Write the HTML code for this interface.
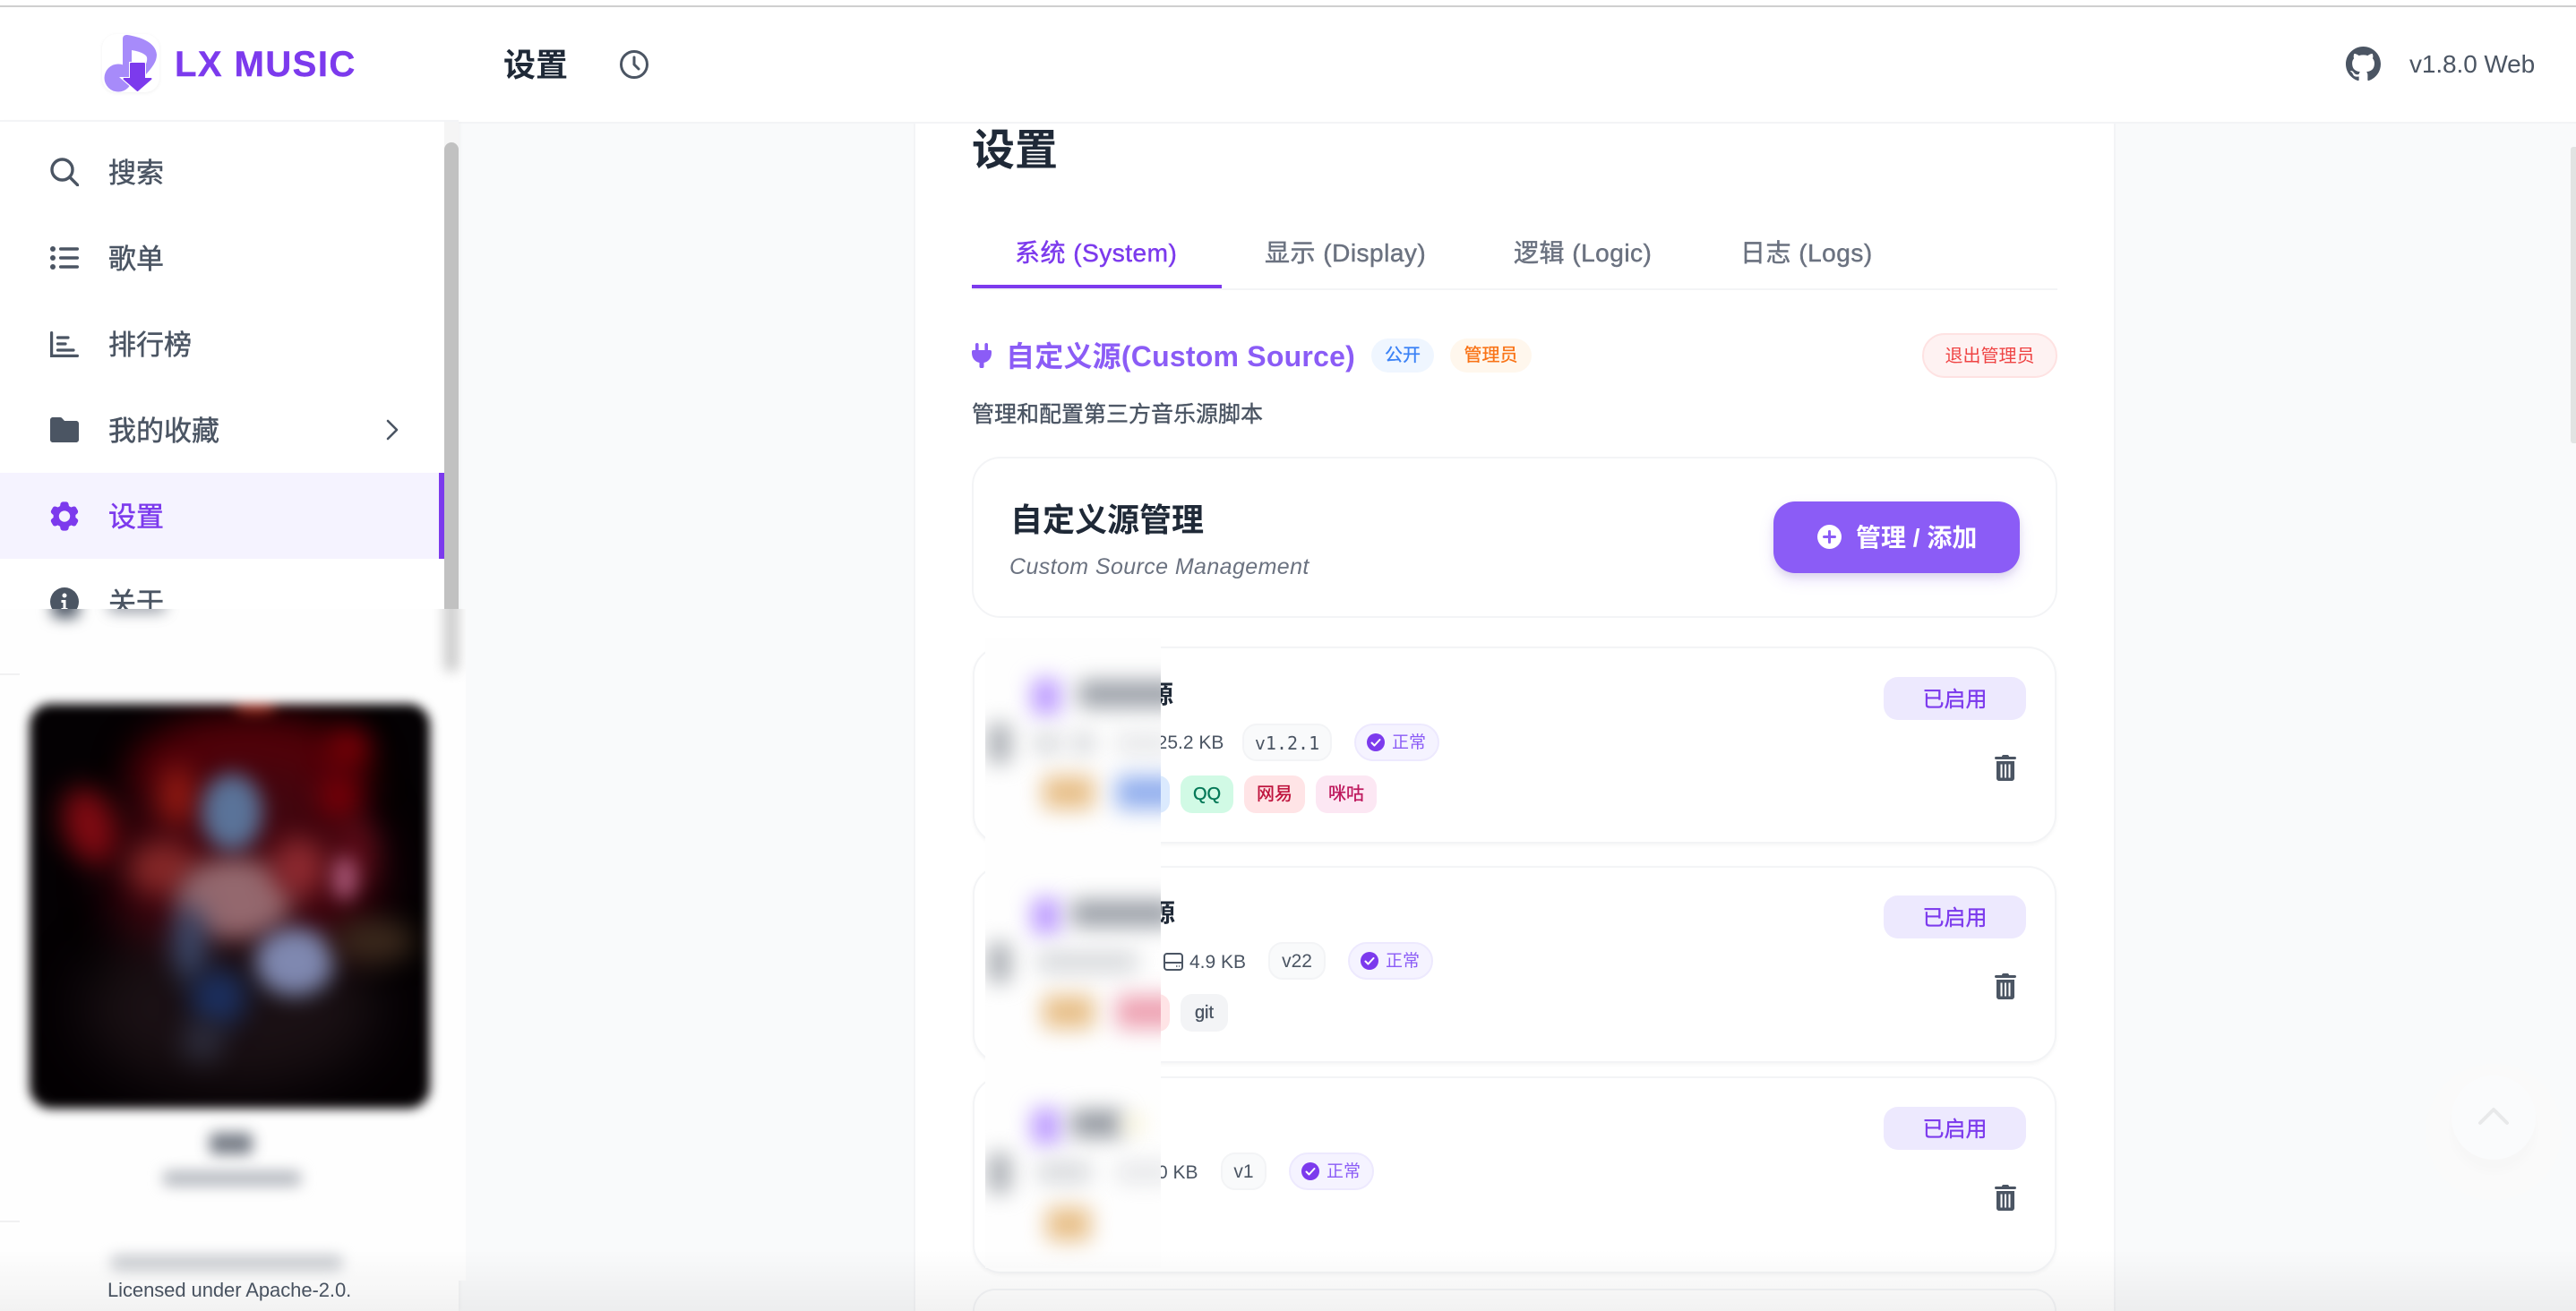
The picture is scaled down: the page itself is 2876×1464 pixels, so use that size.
<!DOCTYPE html>
<html lang="zh">
<head>
<meta charset="utf-8">
<title>LX Music 设置</title>
<style>
*{box-sizing:border-box;margin:0;padding:0}
html,body{width:2876px;height:1464px;overflow:hidden;background:#f9fafb}
body{position:relative;font-family:"Liberation Sans","Noto Sans CJK SC",sans-serif;color:#4b5563}
.a{position:absolute}
.t{position:absolute;white-space:nowrap;line-height:1}
.nav{font-size:31px;font-weight:400;-webkit-text-stroke:.5px currentColor;color:#4b5563;left:121px}
.tab{font-size:28px;font-weight:400;-webkit-text-stroke:.45px currentColor;color:#6b7280;top:269px;letter-spacing:.5px}
.card{position:absolute;left:1086px;width:1210px;height:220px;background:#fff;border:2px solid #f3f4f6;border-radius:32px;box-shadow:0 2px 4px rgba(0,0,0,.04)}
.en{position:absolute;left:2103px;width:159px;height:48px;background:#ede9fe;border-radius:16px;color:#7c3aed;font-size:24px;-webkit-text-stroke:.35px currentColor;text-align:center;line-height:51px}
.ver{position:absolute;height:42px;background:#f9fafb;border:2px solid #f3f4f6;border-radius:16px;color:#4b5563;font-size:21px;line-height:40px;text-align:center}
.st{position:absolute;height:42px;width:95px;background:#f5f3ff;border:2px solid #ede9fe;border-radius:21px;color:#8b5cf6;font-size:19px;line-height:40px;padding-left:40px}
.st svg{position:absolute;left:12px;top:9px}
.tag{position:absolute;height:42px;border-radius:13px;font-size:20px;-webkit-text-stroke:.35px currentColor;text-align:center;line-height:42px}
.size{position:absolute;font-size:21px;line-height:1;color:#4b5563;white-space:nowrap}
.blob{position:absolute;filter:blur(12px);border-radius:6px}
.c{position:absolute;border-radius:50%;filter:blur(14px)}
</style>
</head>
<body>
<div class="a" style="left:0;top:0;width:2876px;height:136px;background:#fff"></div>
<div class="a" style="left:0;top:6px;width:2876px;height:2px;background:#cfcfcf"></div>

<div class="a" style="left:1020px;top:136px;width:1342px;height:1328px;background:#fff;border-left:2px solid #f3f4f6;border-right:2px solid #f3f4f6"></div>
<div class="a" style="left:2870px;top:164px;width:6px;height:331px;background:#e2e4e3;border-radius:3px 0 0 3px"></div>
<div class="a" style="left:512px;top:136px;width:2364px;height:2px;background:#f3f4f6"></div>

<!-- sidebar -->
<div class="a" style="left:0;top:136px;width:512px;height:1328px;background:#fff;box-shadow:2px 0 4px rgba(0,0,0,.03)"></div>
<div class="a" style="left:0;top:134px;width:512px;height:2px;background:#f3f4f6"></div>
<div class="a" style="left:496px;top:136px;width:16px;height:600px;background:#f5f5f5"></div>
<div class="a" style="left:496px;top:159px;width:16px;height:590px;background:#c1c1c1;border-radius:8px"></div>

<!-- logo -->
<div class="a" style="left:114px;top:38px;width:64px;height:65px;background:#fff;border-radius:16px;box-shadow:0 1px 4px rgba(0,0,0,.06)"></div>
<svg class="a" style="left:114px;top:36px" width="66" height="68" viewBox="0 0 66 68">
<circle cx="18" cy="51" r="15.5" fill="#a78bfa"/>
<path d="M23 8C23 4 25 3 28 3C42 5 60 11 61 25C61 33 56 39 49 47L44 44C48 38 51 33 50 28C49 24 40 21 33 20L33 54L23 54Z" fill="#a78bfa"/>
<path d="M30 33H49V50H59L39.500 68L19 50H30Z" fill="#fff"/>
<path d="M32 35H47V52H54.500L39.500 65L24.500 52H32Z" fill="#7c3aed" stroke="#7c3aed" stroke-width="2" stroke-linejoin="round"/>
</svg>
<div class="t" style="left:195px;top:52px;font-size:40px;font-weight:700;color:#7c3aed;letter-spacing:1.45px;-webkit-text-stroke:.4px #7c3aed">LX MUSIC</div>

<!-- header main -->
<div class="t" style="left:562px;top:55px;font-size:36px;font-weight:700;color:#1f2937">设置</div>
<svg class="a" style="left:692px;top:56px" width="32" height="32" viewBox="0 0 32 32" fill="none" stroke="#4b5563" stroke-width="3" stroke-linecap="round" stroke-linejoin="round"><circle cx="16" cy="16" r="14.500"/><path d="M16 8v8l5 5"/></svg>
<svg class="a" style="left:2619px;top:52px" width="39" height="39" viewBox="0 0 16 16" fill="#4b5563"><path d="M8 0C3.58 0 0 3.58 0 8c0 3.54 2.29 6.53 5.47 7.59.4.07.55-.17.55-.38 0-.19-.01-.82-.01-1.49-2.01.37-2.53-.49-2.69-.94-.09-.23-.48-.94-.82-1.13-.28-.15-.68-.52-.01-.53.63-.01 1.08.58 1.23.82.72 1.21 1.87.87 2.33.66.07-.52.28-.87.51-1.07-1.78-.2-3.64-.89-3.64-3.95 0-.87.31-1.59.82-2.15-.08-.2-.36-1.02.08-2.12 0 0 .67-.21 2.2.82.64-.18 1.32-.27 2-.27.68 0 1.36.09 2 .27 1.53-1.04 2.2-.82 2.2-.82.44 1.1.16 1.92.08 2.12.51.56.82 1.27.82 2.15 0 3.07-1.87 3.75-3.65 3.95.29.25.54.73.54 1.48 0 1.07-.01 1.93-.01 2.2 0 .21.15.46.55.38A8.013 8.013 0 0016 8c0-4.42-3.58-8-8-8z"/></svg>
<div class="t" style="left:2690px;top:58px;font-size:28px;color:#4b5563;letter-spacing:-.1px">v1.8.0 Web</div>

<!-- nav -->
<svg class="a" style="left:56px;top:176px" width="32" height="32" viewBox="0 0 32 32" fill="none" stroke="#4b5563" stroke-width="3.400" stroke-linecap="round"><circle cx="13.500" cy="13.500" r="11.500"/><path d="M22 22l9 9"/></svg>
<div class="t nav" style="top:178px">搜索</div>
<svg class="a" style="left:56px;top:274px" width="32" height="28" viewBox="0 0 32 28" fill="#4b5563"><circle cx="3" cy="4" r="3"/><circle cx="3" cy="14" r="3"/><circle cx="3" cy="24" r="3"/><rect x="10" y="2.300" width="22" height="3.400" rx="1.700"/><rect x="10" y="12.300" width="22" height="3.400" rx="1.700"/><rect x="10" y="22.300" width="22" height="3.400" rx="1.700"/></svg>
<div class="t nav" style="top:274px">歌单</div>
<svg class="a" style="left:56px;top:370px" width="32" height="29" viewBox="0 0 32 29" fill="none" stroke="#4b5563" stroke-width="3.200" stroke-linecap="round"><path d="M1.600 1.600V27.400H30.400"/><path d="M8.500 7H20M8.500 14H17M8.500 21H26"/></svg>
<div class="t nav" style="top:370px">排行榜</div>
<svg class="a" style="left:56px;top:466px" width="32" height="28" viewBox="0 0 32 28" fill="#4b5563"><path d="M3 0h8c1 0 1.800.4 2.400 1.100L16 4h13c1.700 0 3 1.300 3 3v18c0 1.700-1.300 3-3 3H3c-1.700 0-3-1.300-3-3V3C0 1.300 1.300 0 3 0z"/></svg>
<div class="t nav" style="top:466px">我的收藏</div>
<svg class="a" style="left:431px;top:468px" width="14" height="24" viewBox="0 0 14 24" fill="none" stroke="#4b5563" stroke-width="2.600" stroke-linecap="round" stroke-linejoin="round"><path d="M2 2l10 10L2 22"/></svg>
<div class="a" style="left:0;top:528px;width:496px;height:96px;background:#f5f3ff"></div>
<div class="a" style="left:490px;top:528px;width:6px;height:96px;background:#7c3aed"></div>
<svg class="a" style="left:56px;top:560px" width="32" height="33" viewBox="2.600 2 18.800 20" fill="#7c3aed"><path fill-rule="evenodd" d="M11.078 2.250c-.917 0-1.699.663-1.850 1.567L9.050 4.889c-.02.12-.115.26-.297.348a7.493 7.493 0 0 0-.986.57c-.166.115-.334.126-.45.083L6.300 5.508a1.875 1.875 0 0 0-2.282.819l-.922 1.597a1.875 1.875 0 0 0 .432 2.385l.84.692c.095.078.17.229.154.43a7.598 7.598 0 0 0 0 1.139c.015.2-.059.352-.153.43l-.841.692a1.875 1.875 0 0 0-.432 2.385l.922 1.597a1.875 1.875 0 0 0 2.282.818l1.019-.382c.115-.043.283-.031.45.082.312.214.641.405.985.57.182.088.277.228.297.35l.178 1.071c.151.904.933 1.567 1.850 1.567h1.844c.916 0 1.699-.663 1.850-1.567l.178-1.072c.02-.12.114-.26.297-.349.344-.165.673-.356.985-.57.167-.114.335-.125.45-.082l1.020.382a1.875 1.875 0 0 0 2.280-.819l.923-1.597a1.875 1.875 0 0 0-.432-2.385l-.84-.692c-.095-.078-.17-.229-.154-.43a7.614 7.614 0 0 0 0-1.139c-.016-.2.059-.352.153-.43l.84-.692c.708-.582.891-1.590.433-2.385l-.922-1.597a1.875 1.875 0 0 0-2.282-.818l-1.020.382c-.114.043-.282.031-.449-.083a7.490 7.490 0 0 0-.985-.57c-.183-.087-.277-.227-.297-.348l-.179-1.072a1.875 1.875 0 0 0-1.850-1.567h-1.843ZM12 15.750a3.750 3.750 0 1 0 0-7.500 3.750 3.750 0 0 0 0 7.500Z"/></svg>
<div class="t nav" style="top:562px;color:#7c3aed">设置</div>
<svg class="a" style="left:56px;top:656px" width="32" height="32" viewBox="0 0 32 32"><circle cx="16" cy="16" r="16" fill="#4b5563"/><circle cx="16" cy="9" r="2.500" fill="#fff"/><path d="M12.500 14h5v9h2v3h-7v-3h2v-6h-2z" fill="#fff"/></svg>
<div class="t nav" style="top:658px">关于</div>

<!-- sidebar blur overlay -->
<div class="a" style="left:0;top:680px;width:520px;height:750px;background:#fefefe;overflow:hidden">
  <div class="blob" style="left:58px;top:-14px;width:30px;height:24px;background:#4b5563;filter:blur(8px)"></div>
  <div class="blob" style="left:121px;top:-12px;width:64px;height:16px;background:#6b7280;filter:blur(8px);opacity:.7"></div>
  <div class="blob" style="left:496px;top:-20px;width:16px;height:90px;background:#c1c1c1;opacity:.85;filter:blur(7px)"></div>
  <!-- cover -->
  <div class="a" style="left:33px;top:106px;width:447px;height:452px;filter:blur(6px)">
    <div class="a" style="inset:0;border-radius:24px;background:#040103;overflow:hidden">
      <div class="c" style="left:112px;top:12px;width:268px;height:130px;background:#560008;filter:blur(20px)"></div>
      <div class="c" style="left:90px;top:60px;width:300px;height:260px;background:#42060f;filter:blur(26px)"></div>
      <div class="c" style="left:341px;top:125px;width:45px;height:80px;background:#5a0c18"></div>
      <div class="c" style="left:60px;top:250px;width:330px;height:180px;background:#1a1014;filter:blur(30px)"></div>
      <div class="c" style="left:38px;top:92px;width:58px;height:88px;background:#800a12;transform:rotate(-18deg)"></div>
      <div class="c" style="left:146px;top:70px;width:38px;height:65px;background:#961a12"></div>
      <div class="c" style="left:112px;top:155px;width:76px;height:58px;background:#862828"></div>
      <div class="c" style="left:335px;top:28px;width:44px;height:40px;background:#820008"></div>
      <div class="c" style="left:325px;top:82px;width:42px;height:44px;background:#7e0008"></div>
      <div class="c" style="left:165px;top:172px;width:128px;height:90px;background:#94686e;filter:blur(12px)"></div>
      <div class="c" style="left:270px;top:150px;width:60px;height:66px;background:#8e2a30"></div>
      <div class="c" style="left:338px;top:170px;width:28px;height:50px;background:#a85676;filter:blur(9px)"></div>
      <div class="c" style="left:192px;top:78px;width:68px;height:86px;background:#5a7399;filter:blur(10px)"></div>
      <div class="c" style="left:252px;top:250px;width:88px;height:76px;background:#7f88b0;filter:blur(11px)"></div>
      <div class="c" style="left:160px;top:222px;width:38px;height:88px;background:#3c4a6c"></div>
      <div class="c" style="left:180px;top:296px;width:62px;height:64px;background:#1c3060"></div>
      <div class="c" style="left:170px;top:355px;width:46px;height:44px;background:#2e2e3e"></div>
      <div class="c" style="left:340px;top:240px;width:90px;height:50px;background:#3a281c"></div>
      <div class="c" style="left:228px;top:-4px;width:48px;height:14px;background:#b03828;filter:blur(5px)"></div>
    </div>
  </div>
  <div class="blob" style="left:234px;top:585px;width:48px;height:24px;background:#5f6672;opacity:.85;filter:blur(8px)"></div>
  <div class="blob" style="left:182px;top:628px;width:154px;height:16px;background:#b0b4bb;filter:blur(8px)"></div>
  <div class="blob" style="left:124px;top:722px;width:258px;height:16px;background:#c4c7cc;filter:blur(8px)"></div>
</div>
<div class="a" style="left:0;top:752px;width:22px;height:2px;background:#f1f1f2"></div>
<div class="a" style="left:0;top:1363px;width:22px;height:2px;background:#f1f1f2"></div>
<div class="t" style="left:120px;top:1430px;font-size:22px;color:#4b5563;letter-spacing:-.07px">Licensed under Apache-2.0.</div>

<!-- content -->
<div class="t" style="left:1085px;top:145px;font-size:48px;font-weight:700;color:#1f2937">设置</div>
<div class="a" style="left:1085px;top:322px;width:1212px;height:2px;background:#f3f4f6"></div>
<div class="a" style="left:1085px;top:318px;width:279px;height:4px;background:#7c3aed"></div>
<div class="t tab" style="left:1133px;color:#7c3aed">系统 (System)</div>
<div class="t tab" style="left:1412px">显示 (Display)</div>
<div class="t tab" style="left:1690px">逻辑 (Logic)</div>
<div class="t tab" style="left:1943px">日志 (Logs)</div>

<svg class="a" style="left:1085px;top:383px" width="22" height="28" viewBox="0 0 22 28" fill="#8b5cf6"><rect x="4" y="0" width="3.600" height="9" rx="1.800"/><rect x="14.400" y="0" width="3.600" height="9" rx="1.800"/><path d="M1.500 8h19c.8 0 1.500.7 1.500 1.500V11c0 6-3.500 10-8.500 11v4.500c0 .8-.7 1.500-1.500 1.500h-2c-.8 0-1.500-.7-1.500-1.500V22C3.500 21 0 17 0 11V9.500C0 8.700.7 8 1.500 8z"/></svg>
<div class="t" style="left:1123px;top:382px;font-size:32px;font-weight:700;color:#8b5cf6;letter-spacing:.22px">自定义源(Custom Source)</div>
<div class="t" style="left:1531px;top:378px;width:70px;height:38px;background:#eff6ff;border-radius:19px;color:#3b82f6;font-size:20px;-webkit-text-stroke:.3px #3b82f6;line-height:39px;text-align:center">公开</div>
<div class="t" style="left:1619px;top:378px;width:91px;height:38px;background:#fff7ed;border-radius:19px;color:#f97316;font-size:20px;-webkit-text-stroke:.3px #f97316;line-height:39px;text-align:center">管理员</div>
<div class="t" style="left:2146px;top:372px;width:151px;height:50px;background:#fef2f2;border:2px solid #fee2e2;border-radius:25px;color:#ef4444;font-size:20px;line-height:48px;text-align:center">退出管理员</div>
<div class="t" style="left:1085px;top:451px;font-size:25px;-webkit-text-stroke:.4px #4b5563;color:#4b5563">管理和配置第三方音乐源脚本</div>

<!-- manage card -->
<div class="a" style="left:1085px;top:510px;width:1212px;height:180px;background:#fff;border:2px solid #f3f4f6;border-radius:32px"></div>
<div class="t" style="left:1128px;top:563px;font-size:36px;font-weight:700;color:#1f2937">自定义源管理</div>
<div class="t" style="left:1127px;top:621px;font-size:25px;font-style:italic;color:#6b7280;letter-spacing:.4px">Custom Source Management</div>
<div class="a" style="left:1980px;top:560px;width:275px;height:80px;background:#8b5cf6;border-radius:24px;box-shadow:0 8px 16px rgba(139,92,246,.18),0 4px 8px rgba(0,0,0,.08)"></div>
<svg class="a" style="left:2029px;top:586px" width="27" height="27" viewBox="0 0 27 27"><circle cx="13.500" cy="13.500" r="13.500" fill="#fff"/><path d="M13.500 7.500v12M7.500 13.500h12" stroke="#8b5cf6" stroke-width="3" stroke-linecap="round"/></svg>
<div class="t" style="left:2072px;top:587px;font-size:28px;font-weight:700;color:#fff">管理 / 添加</div>

<!-- source cards -->
<div class="card" style="top:722px"></div>
<div class="card" style="top:967px"></div>
<div class="card" style="top:1202px"></div>
<div class="card" style="top:1439px;height:25px;border-bottom:0;border-radius:32px 32px 0 0;box-shadow:none"></div>

<!-- card 1 -->
<div class="t" style="left:1282px;top:762px;font-size:28px;font-weight:700;color:#1f2937">源</div>
<div class="size" style="left:1280px;top:819px">225.2 KB</div>
<div class="ver" style="left:1387px;top:808px;width:100px;font-family:'DejaVu Sans Mono','Liberation Mono',monospace;font-size:20px">v1.2.1</div>
<div class="st" style="left:1512px;top:808px"><svg width="20" height="20" viewBox="0 0 20 20"><circle cx="10" cy="10" r="10" fill="#7c3aed"/><path d="M5.500 10.500l3 3 6-6.500" fill="none" stroke="#fff" stroke-width="2" stroke-linecap="round" stroke-linejoin="round"/></svg>正常</div>
<div class="tag" style="left:1240px;top:866px;width:66px;background:#dbeafe"></div>
<div class="tag" style="left:1318px;top:866px;width:59px;background:#d1fae5;color:#047857">QQ</div>
<div class="tag" style="left:1389px;top:866px;width:68px;background:#ffe4e6;color:#be123c">网易</div>
<div class="tag" style="left:1469px;top:866px;width:68px;background:#fce7f3;color:#be185d">咪咕</div>
<div class="en" style="top:756px">已启用</div>

<!-- card 2 -->
<div class="t" style="left:1284px;top:1006px;font-size:28px;font-weight:700;color:#1f2937">源</div>
<svg class="a" style="left:1299px;top:1063px" width="22" height="22" viewBox="0 0 22 22" fill="none" stroke="#4b5563" stroke-width="2"><rect x="1" y="2" width="20" height="18" rx="3"/><path d="M1 12h20"/><path d="M14 16h1.500M17 16h1" stroke-width="1.600"/></svg>
<div class="size" style="left:1328px;top:1064px">4.9 KB</div>
<div class="ver" style="left:1416px;top:1052px;width:64px">v22</div>
<div class="st" style="left:1505px;top:1052px"><svg width="20" height="20" viewBox="0 0 20 20"><circle cx="10" cy="10" r="10" fill="#7c3aed"/><path d="M5.500 10.500l3 3 6-6.500" fill="none" stroke="#fff" stroke-width="2" stroke-linecap="round" stroke-linejoin="round"/></svg>正常</div>
<div class="tag" style="left:1240px;top:1110px;width:66px;background:#ffe4e6"></div>
<div class="tag" style="left:1318px;top:1110px;width:53px;background:#f3f4f6;color:#4b5563">git</div>
<div class="en" style="top:1000px">已启用</div>

<!-- card 3 -->
<div class="size" style="left:1292px;top:1299px">0 KB</div>
<div class="ver" style="left:1363px;top:1287px;width:51px">v1</div>
<div class="st" style="left:1439px;top:1287px"><svg width="20" height="20" viewBox="0 0 20 20"><circle cx="10" cy="10" r="10" fill="#7c3aed"/><path d="M5.500 10.500l3 3 6-6.500" fill="none" stroke="#fff" stroke-width="2" stroke-linecap="round" stroke-linejoin="round"/></svg>正常</div>
<div class="en" style="top:1236px">已启用</div>

<!-- trash icons -->
<svg class="a" style="left:2227px;top:843px" width="24" height="29" viewBox="0 0 24 29" fill="#4b5563"><path d="M8 2c0-1 .8-2 1.800-2h4.400c1 0 1.800 1 1.800 2h6.500c.8 0 1.500.6 1.500 1.500S23.300 5 22.500 5h-21C.7 5 0 4.400 0 3.500S.7 2 1.500 2z"/><path fill-rule="evenodd" d="M2 7h20v19c0 1.700-1.300 3-3 3H5c-1.700 0-3-1.300-3-3zM6.500 10.500v15h2v-15zM11 10.500v15h2v-15zM15.500 10.500v15h2v-15z"/></svg>
<svg class="a" style="left:2227px;top:1087px" width="24" height="29" viewBox="0 0 24 29" fill="#4b5563"><path d="M8 2c0-1 .8-2 1.800-2h4.400c1 0 1.800 1 1.800 2h6.500c.8 0 1.500.6 1.500 1.500S23.300 5 22.500 5h-21C.7 5 0 4.400 0 3.500S.7 2 1.500 2z"/><path fill-rule="evenodd" d="M2 7h20v19c0 1.700-1.300 3-3 3H5c-1.700 0-3-1.300-3-3zM6.500 10.500v15h2v-15zM11 10.500v15h2v-15zM15.500 10.500v15h2v-15z"/></svg>
<svg class="a" style="left:2227px;top:1323px" width="24" height="29" viewBox="0 0 24 29" fill="#4b5563"><path d="M8 2c0-1 .8-2 1.800-2h4.400c1 0 1.800 1 1.800 2h6.500c.8 0 1.500.6 1.500 1.500S23.300 5 22.500 5h-21C.7 5 0 4.400 0 3.500S.7 2 1.500 2z"/><path fill-rule="evenodd" d="M2 7h20v19c0 1.700-1.300 3-3 3H5c-1.700 0-3-1.300-3-3zM6.500 10.500v15h2v-15zM11 10.500v15h2v-15zM15.500 10.500v15h2v-15z"/></svg>

<!-- card blur overlay -->
<div class="a" style="left:1100px;top:712px;width:196px;height:704px;background:#fefefe;overflow:hidden">
  <div class="blob" style="left:52px;top:46px;width:32px;height:40px;background:#bb99ff"></div>
  <div class="blob" style="left:104px;top:48px;width:116px;height:30px;background:#9a9fa7"></div>
  <div class="blob" style="left:4px;top:96px;width:24px;height:44px;background:#a4a8ae"></div>
  <div class="blob" style="left:54px;top:106px;width:30px;height:24px;background:#d6d8db"></div>
  <div class="blob" style="left:96px;top:106px;width:26px;height:24px;background:#d6d8db"></div>
  <div class="blob" style="left:146px;top:106px;width:64px;height:24px;background:#e6e7e9"></div>
  <div class="blob" style="left:64px;top:154px;width:58px;height:38px;background:#e8c08a"></div>
  <div class="blob" style="left:146px;top:154px;width:74px;height:38px;background:#93b0ee"></div>

  <div class="blob" style="left:52px;top:291px;width:32px;height:40px;background:#bb99ff"></div>
  <div class="blob" style="left:96px;top:293px;width:116px;height:30px;background:#9a9fa7"></div>
  <div class="blob" style="left:4px;top:341px;width:24px;height:44px;background:#a4a8ae"></div>
  <div class="blob" style="left:58px;top:350px;width:112px;height:24px;background:#d6d8db"></div>
  <div class="blob" style="left:64px;top:399px;width:58px;height:38px;background:#e8c08a"></div>
  <div class="blob" style="left:146px;top:399px;width:74px;height:38px;background:#eea4b4"></div>

  <div class="blob" style="left:52px;top:526px;width:32px;height:40px;background:#bb99ff"></div>
  <div class="blob" style="left:96px;top:528px;width:58px;height:30px;background:#92979f"></div>
  <div class="blob" style="left:155px;top:532px;width:22px;height:22px;background:#fbf6d8"></div>
  <div class="blob" style="left:4px;top:576px;width:24px;height:44px;background:#a4a8ae"></div>
  <div class="blob" style="left:58px;top:585px;width:60px;height:24px;background:#d6d8db"></div>
  <div class="blob" style="left:146px;top:585px;width:64px;height:24px;background:#e6e7e9"></div>
  <div class="blob" style="left:68px;top:636px;width:50px;height:38px;background:#e8c08a"></div>
</div>

<!-- back to top -->
<div class="a" style="left:2708px;top:1188px;width:152px;height:152px;border-radius:50%;background:#f9f9fa;opacity:.75"></div>
<div class="a" style="left:2737px;top:1201px;width:94px;height:94px;border-radius:50%;background:#fafbfc;box-shadow:0 14px 12px rgba(0,0,0,.015)"></div>
<svg class="a" style="left:2766px;top:1235px" width="36" height="22" viewBox="0 0 36 22" fill="none" stroke="#e8e9ea" stroke-width="4" stroke-linecap="round" stroke-linejoin="round"><path d="M3 19L18 4l15 15"/></svg>

<!-- bottom fade -->
<div class="a" style="left:0;top:1395px;width:2876px;height:69px;background:linear-gradient(to bottom,rgba(0,0,0,0),rgba(0,0,0,.05));pointer-events:none"></div>
</body>
</html>
